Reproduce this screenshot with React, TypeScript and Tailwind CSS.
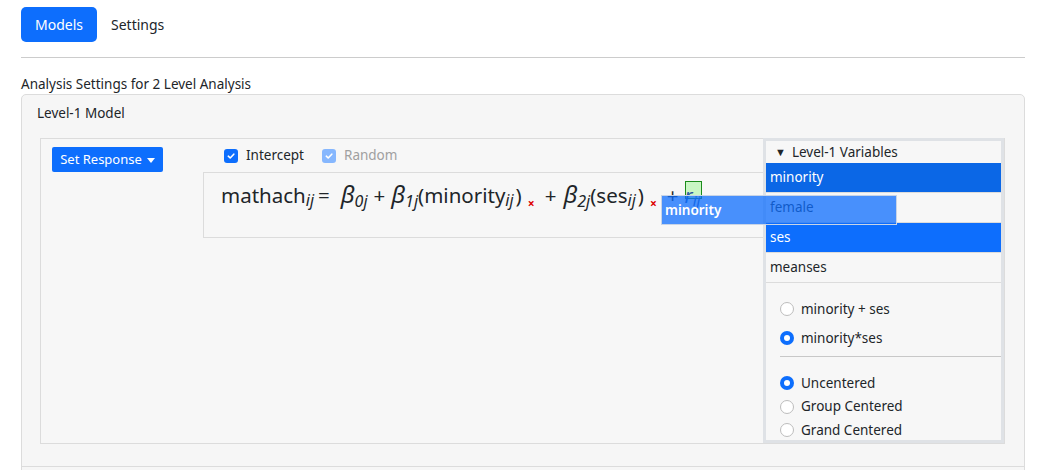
import React from "react";

const FONT = { fontFamily: '"Noto Sans", "Open Sans", sans-serif' };

function Check({ disabled }: { disabled?: boolean }) {
  return (
    <span className={`flex h-[14px] w-[14px] items-center justify-center rounded-[3px] ${disabled ? "bg-[#86b7fe]" : "bg-[#0d6efd]"}`}>
      <svg width="10" height="10" viewBox="0 0 10 10" fill="none">
        <path d="M2.3 5.2 4.2 7 7.8 3.2" stroke="white" strokeWidth="1.6" strokeLinecap="round" strokeLinejoin="round" />
      </svg>
    </span>
  );
}

function Radio({ checked, label }: { checked?: boolean; label: string }) {
  return (
    <div className="flex h-[20px] items-center gap-[7px] text-[13.5px] text-[#212529]">
      {checked ? (
        <span className="flex h-[14px] w-[14px] items-center justify-center rounded-full bg-[#0d6efd]">
          <span className="h-[6px] w-[6px] rounded-full bg-white" />
        </span>
      ) : (
        <span className="h-[14px] w-[14px] rounded-full border border-[#bdbdbd] bg-white" />
      )}
      <span>{label}</span>
    </div>
  );
}

function Beta({ n }: { n: string }) {
  return (
    <span className="italic">
      <span className="text-[24px]">β</span>
      <span className="relative top-[4px] text-[16px]">{n}j</span>
    </span>
  );
}

function Sub({ t }: { t: string }) {
  return <span className="relative top-[3px] text-[16px] italic">{t}</span>;
}

function X() {
  return <span className="relative top-[5px] ml-[6px] mr-[10px] text-[12px] font-bold text-[#d00]">×</span>;
}

const variables = [
  { name: "minority", cls: "bg-[#0b67e6] text-white" },
  { name: "female", cls: "bg-[#f7f7f7] text-[#212529]" },
  { name: "ses", cls: "bg-[#0d6efd] text-white" },
  { name: "meanses", cls: "bg-[#f7f7f7] text-[#212529]" },
];

export default function App() {
  return (
    <div className="relative h-[470px] w-[1039px] overflow-hidden bg-white text-[#212529]" style={FONT}>
      <div className="ml-[21px] w-[1004px]">
        <div className="flex items-center pt-[7px]">
          <div className="flex h-[35px] w-[76px] items-center justify-center rounded-[5px] bg-[#0d6efd] text-[14px] text-white">Models</div>
          <div className="ml-[14px] text-[14px]">Settings</div>
        </div>
        <div className="mt-[15px] border-t border-[#cccccc]" />
        <div className="mt-[17px] text-[13.5px] leading-[18px]">Analysis Settings for 2 Level Analysis</div>

        <div className="mt-[1px] h-[380px] rounded-t-[5px] border border-[#dcdcdc] bg-[#f6f6f6]">
          <div className="pl-[15px] pt-[9px] text-[13.5px] leading-[18px]">Level-1 Model</div>

          <div className="ml-[18px] mt-[16px] flex h-[306px] w-[965px] border border-[#dcdcdc] bg-[#f7f7f7]">
            <div className="w-[162px] shrink-0 pl-[11px] pt-[8px]">
              <div className="flex h-[25px] w-[111px] items-center justify-center gap-[5px] rounded-[2px] bg-[#0d6efd] text-[13px] text-white">
                Set Response
                <span className="mt-[1px] h-0 w-0 border-x-[4px] border-t-[5px] border-x-transparent border-t-white" />
              </div>
            </div>

            <div className="relative flex-1">
              <div className="flex h-[33px] items-center pl-[21px] text-[13.5px]">
                <div className="flex items-center gap-[8px]">
                  <Check />
                  <span>Intercept</span>
                </div>
                <div className="ml-[18px] flex items-center gap-[8px] text-[#a0a0a0]">
                  <Check disabled />
                  <span>Random</span>
                </div>
              </div>
              <div className="relative h-[66px] border border-r-0 border-[#dcdcdc]">
                <div className="flex items-baseline whitespace-nowrap pl-[17px] pt-[3px] text-[20.5px] text-[#212529]">
                  <span>mathach</span>
                  <Sub t="ij" />
                  <span className="ml-[4px] mr-[11px]">=</span>
                  <Beta n="0" />
                  <span className="mx-[6px]">+</span>
                  <Beta n="1" />
                  <span>(minority</span>
                  <Sub t="ij" />
                  <span className="ml-[2px]">)</span>
                  <X />
                  <span className="mr-[7px]">+</span>
                  <Beta n="2" />
                  <span>(ses</span>
                  <Sub t="ij" />
                  <span className="ml-[2px]">)</span>
                  <X />
                  <span className="relative mr-[6px]">+</span>
                  <span className="relative">
                    <span className="absolute top-[1px] left-0 h-[18px] w-[17px] border border-[#1c8c1c] bg-[#c9f6c4]" />
                    <span className="relative italic text-[#2a56a0]">r</span>
                    <span className="relative top-[3px] text-[15px] italic text-[#2a56a0]">ij</span>
                  </span>
                </div>
              </div>
            </div>

            <div className="-mt-px flex w-[241px] shrink-0 flex-col border-[3px] border-[#dfe2e6] bg-[#f7f7f7]">
              <div className="flex h-[22px] shrink-0 items-center gap-[6px] pl-[9px] text-[13.5px]">
                <span className="text-[11px]">▼</span>
                <span>Level-1 Variables</span>
              </div>
              {variables.map((v) => (
                <div key={v.name} className={`flex h-[30px] shrink-0 items-center border-b border-[#dcdcdc] pl-[4px] text-[13.5px] ${v.cls}`}>
                  {v.name}
                </div>
              ))}
              <div className="flex flex-col gap-[9px] pl-[14px] pt-[16px]">
                <Radio label="minority + ses" />
                <Radio checked label="minority*ses" />
              </div>
              <div className="ml-[14px] mt-[8px] shrink-0 border-t border-[#c8c8c8]" />
              <div className="flex flex-col gap-[3.5px] pl-[14px] pt-[16px]">
                <Radio checked label="Uncentered" />
                <Radio label="Group Centered" />
                <Radio label="Grand Centered" />
              </div>
            </div>
          </div>
          <div className="mt-[22px] border-t border-[#dcdcdc]" />
        </div>
      </div>

      <div className="absolute left-[661px] top-[195px] flex h-[30px] w-[236px] items-center border border-[#c8d4e6] bg-[#0d6efd]/75 pl-[3px] text-[13.5px] font-semibold text-white">
        minority
      </div>
    </div>
  );
}
